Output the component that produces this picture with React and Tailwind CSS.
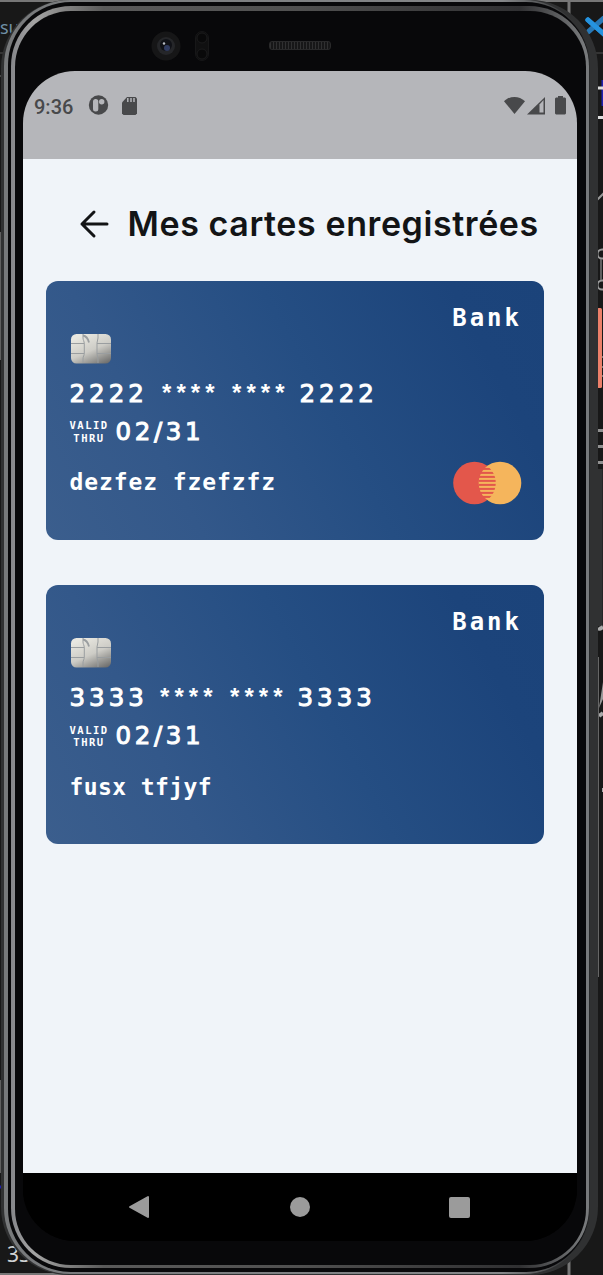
import React from "react";

const CARDS = [
  { number: "2222 **** **** 2222", first: "2222", last: "2222", date: "02/31", name: "dezfez fzefzfz", network: "mastercard", groups: "w-[90px]", stars: "w-[70px]", nameSpacing: "tracking-[0.900px]" },
  { number: "3333 **** **** 3333", first: "3333", last: "3333", date: "02/31", name: "fusx tfjyf", network: null, groups: "w-[88px]", stars: "w-[70px]", nameSpacing: "tracking-[0.400px]" },
];

function Chip({ id }) {
  return (
    <svg className="block h-[32px] w-[43px]" viewBox="0 0 43 32">
      <defs>
        <linearGradient id={id} x1="0.3" y1="0" x2="0.9" y2="1">
          <stop offset="0" stopColor="#e9e8e1" />
          <stop offset="0.5" stopColor="#cdccc6" />
          <stop offset="1" stopColor="#6c6c6b" />
        </linearGradient>
      </defs>
      <rect x="1" y="1" width="40" height="29.5" rx="5.5" fill={`url(#${id})`} />
      <g fill="none" stroke="#9a9ea0" strokeWidth="1">
        <path d="M13 1v4c0 2 1.300 3 1.300 6v9c0 3-1.300 3-1.300 6v4M28 1v4l-1 5v11l1 5v4M1 10.500h13M1 20.500h13M27 10.500h14M27 20.500h14" />
        <path d="M13 2.500c3 .5 5 3 6 7" strokeWidth="1.800" />
      </g>
    </svg>
  );
}

function Mastercard() {
  const bars = [6, 10, 14, 18, 22, 26, 30, 34];
  return (
    <svg className="block h-[44px] w-[69px]" viewBox="0 0 69 44">
      <defs>
        <clipPath id="overlap"><circle cx="21.500" cy="22" r="21.300" /></clipPath>
      </defs>
      <circle cx="21.500" cy="22" r="21.300" fill="#e3574b" />
      <circle cx="47" cy="22" r="21.300" fill="#f5b55c" />
      <g clipPath="url(#overlap)" fill="#e3574b">
        {bars.map((y) => (
          <rect key={y} x={y < 10 || y > 32 ? 30 : 26} y={y + 0.9} width="18" height="2" />
        ))}
      </g>
    </svg>
  );
}

function BankCard({ card, index }) {
  return (
    <section className="flex h-[259px] w-[498.500px] flex-col rounded-[12px] bg-[linear-gradient(62deg,#3b5e8d_0%,#33588a_25%,#254e83_55%,#1c447b_85%,#1b437a_100%)] pl-[24px] pr-[22px] pt-[22px] text-white">
      <div className="flex h-[30px] justify-end font-['DejaVu_Sans_Mono',monospace] text-[24px] font-bold leading-[30px] tracking-[3px]">Bank</div>
      <Chip id={`chip-${index}`} />
      <div className="mt-[12px] flex h-[34px] items-center whitespace-pre font-['DejaVu_Sans',sans-serif] text-[24.500px] leading-[34px] tracking-[4px] [-webkit-text-stroke:1px_white]">
        <span className={`block ${card.groups}`}>{card.first}</span>
        <span className={`block pt-[4px] font-['Liberation_Mono',monospace] text-[24px] font-bold tracking-[0px] [-webkit-text-stroke:0px] ${card.stars}`}>****</span>
        <span className={`block pt-[4px] font-['Liberation_Mono',monospace] text-[24px] font-bold tracking-[0px] [-webkit-text-stroke:0px] ${card.stars}`}>****</span>
        <span className="block">{card.last}</span>
      </div>
      <div className="mt-[4px] flex h-[34px] items-center">
        <div className="w-[46px] pr-[7px] text-center font-['DejaVu_Sans_Mono',monospace] text-[10.500px] font-bold leading-[12.500px] tracking-[1.500px]">
          VALID<br />THRU
        </div>
        <div className="font-['DejaVu_Sans',sans-serif] text-[24.500px] leading-[34px] tracking-[3.600px] [-webkit-text-stroke:1px_white]">{card.date}</div>
      </div>
      <div className="flex h-[68px] items-center justify-between">
        <div className={`font-['DejaVu_Sans_Mono',monospace] text-[23px] font-bold ${card.nameSpacing}`}>{card.name}</div>
        {card.network && <Mastercard />}
      </div>
    </section>
  );
}

function StatusBar() {
  return (
    <div className="flex h-[88px] shrink-0 items-start bg-[#b5b6ba] pl-[11px] pr-[11px] pt-[24px] text-[#48494b]">
      <span className="w-[54px] font-['Roboto',sans-serif] text-[20px] font-medium leading-[24px]">9:36</span>
      <svg className="h-[20px] w-[21px]" viewBox="0 0 21 20">
        <circle cx="10.500" cy="10" r="9.700" fill="currentColor" />
        <rect x="5" y="4" width="5.300" height="12.500" rx="2.500" fill="#b5b6ba" />
        <circle cx="13.700" cy="6.700" r="2.700" fill="#b5b6ba" />
      </svg>
      <svg className="ml-[13px] mt-[2px] h-[18px] w-[15px]" viewBox="0 0 15 18">
        <path d="M5 0h8.500L15 1.500v15L13.500 18h-12L0 16.500V5.500Z" fill="currentColor" />
        <path d="M5.800 1v4M9 1v4M12 1v4" stroke="#b5b6ba" strokeWidth="1.500" />
      </svg>
      <div className="ml-auto flex pt-px">
        <svg className="h-[19px] w-[21px]" viewBox="0 0 21 19"><path d="M0 5.200C6-.5 15-.5 21 5.200L10.500 18Z" fill="currentColor" /></svg>
        <svg className="ml-[2px] h-[19px] w-[18px]" viewBox="0 0 18 19">
          <path d="M0 18.500 18 1v17.500Z" fill="currentColor" />
          <path d="M12.500 8.500 16.500 4v12.500h-4Z" fill="#b5b6ba" />
        </svg>
        <svg className="ml-[10px] h-[19px] w-[11px]" viewBox="0 0 11 19"><path d="M3 0h5v1.500h2l1 1v15l-1 1H1l-1-1v-15l1-1h2Z" fill="currentColor" /></svg>
      </div>
    </div>
  );
}

function Desktop() {
  return (
    <div className="absolute inset-0">
      <svg className="block h-[1275px] w-[603px]" viewBox="0 0 603 1275">
        <path d="M0 1h603" stroke="#777" strokeWidth="2" />
        <path d="M569 0v40M569 1250v25M0 1274.500h520" stroke="#777" strokeWidth="3" />
        <path d="M0 53h30M590 53h13" stroke="#343434" strokeWidth="2" />
        <path d="M0 76h3" stroke="#777" strokeWidth="1" />
        <path d="M.5 232v128M.5 1080v93" stroke="#606060" strokeWidth="1.500" />
        <path d="M0 1187h2M603 80v26" stroke="#2020b0" strokeWidth="3" />
        <path d="M588 20 605 35" stroke="#2593df" strokeWidth="5" strokeLinecap="round" />
        <path d="M588 32 604 18" stroke="#2878b5" strokeWidth="5" strokeLinecap="round" />
        <path d="M588 20 605 35" stroke="#2593df" strokeWidth="5" strokeLinecap="round" />
        <path d="M597 88h6M597 117.500h6" stroke="#ddd" strokeWidth="3" />
        <path d="m596 201 8-8" stroke="#999" strokeWidth="2" />
        <circle cx="602" cy="254" r="4.500" fill="none" stroke="#999" strokeWidth="2" />
        <circle cx="602" cy="285" r="4.500" fill="none" stroke="#999" strokeWidth="2" />
        <path d="M601 259v21" stroke="#777" strokeWidth="1.500" />
        <rect x="597" y="308" width="5" height="80" rx="1.500" fill="#ed806a" />
        <path d="M602 357h1M602 367h1M602 376h1" stroke="#777" strokeWidth="2" />
        <path d="M597 430.500h6M597 446.500h6M597 462.500h6" stroke="#909090" strokeWidth="3" />
        <path d="M600 469v157" stroke="#303132" strokeWidth="5" />
        <path d="M598 628c2 2 3 0 5-1M599 716l4-3M602 790h1" fill="none" stroke="#aaa" strokeWidth="4" />
        <path d="m599 708 4-26v17Z" fill="#999" />
        <path d="M598.500 657v320" stroke="#666" strokeWidth="1" />
      </svg>
    </div>
  );
}

export default function App() {
  return (
    <div className="relative flex h-[1275px] w-[603px] overflow-hidden bg-[#181818] pl-px">
      <Desktop />
      <span className="absolute left-0 top-[16px] font-['Noto_Sans',sans-serif] text-[18px] leading-[22px] text-[#6f8fa5]">su</span>
      <span className="absolute left-[7px] top-[1242px] font-['Noto_Sans',sans-serif] text-[21px] leading-[25px] text-[#cfd1d2]">33</span>

      <div className="relative flex h-[1275px] w-[597px] rounded-[68px] bg-[#303132] pb-px pl-[3px] pr-[8px]">
        <div className="flex flex-1 rounded-[66px] bg-[linear-gradient(90deg,#77797b_0%,#858789_85%,#292a2b_98%)] pb-[2px] pl-[4px] pr-px pt-[2px]">
          <div className="flex flex-1 rounded-[63px] bg-[#08080a] pb-[4px] pl-[3px] pt-[4px]">
            <div className="flex flex-1 rounded-[60px] bg-[linear-gradient(90deg,#85868a_0%,#a4a4a4_4%,#5a5a5a_16%,#505050_50%,#303032_88%,#77797b_99%)] pb-[3px] pl-[4px] pr-[3px] pt-[5px]">
              <div className="flex flex-1 flex-col rounded-[56px] bg-[#08080a] pl-[8px] pr-[9px]">
                <div className="flex h-[60px] shrink-0 items-start pl-[128px] pt-[20px]">
                  <svg className="h-[30px] w-[30px]" viewBox="0 0 30 30">
                    <circle cx="15" cy="15" r="14.500" fill="#161617" />
                    <circle cx="15" cy="15" r="9" fill="#252629" />
                    <circle cx="15" cy="14" r="6" fill="#101117" />
                    <circle cx="16" cy="17" r="3" fill="#303b60" />
                    <circle cx="13" cy="12.500" r="1.200" fill="#b9bdc5" />
                  </svg>
                  <svg className="ml-[14px] h-[30px] w-[14px]" viewBox="0 0 14 30">
                    <rect x=".5" y=".5" width="13" height="29" rx="6.500" fill="#101011" stroke="#171718" />
                    <circle cx="7" cy="7" r="5" fill="#09090a" stroke="#1b1b1c" />
                    <circle cx="7" cy="23" r="5" fill="#09090a" stroke="#1b1b1c" />
                  </svg>
                  <div className="ml-[60px] mt-[10px] h-[9px] w-[62px] rounded-[3px] border border-[#29292a] bg-[repeating-linear-gradient(90deg,#303031_0px,#303031_1px,#171718_1px,#171718_3px)]" />
                </div>
                <main className="flex h-[1170px] w-[554px] shrink-0 flex-col overflow-hidden rounded-[52px] bg-black">
                  <StatusBar />
                  <div className="flex h-[1014px] shrink-0 flex-col bg-[#f0f4f9] pl-[22.500px]">
                    <header className="flex h-[121.500px] shrink-0 items-start pl-[33px] pt-[44px] text-[#131416]">
                      <svg className="mt-[6px] h-[30px] w-[30px]" viewBox="0 0 30 30">
                        <path d="M28 15H3M15 3 3 15l12 12" fill="none" stroke="currentColor" strokeWidth="3" strokeLinecap="round" strokeLinejoin="round" />
                      </svg>
                      <h1 className="ml-[19px] whitespace-nowrap font-['Inter',sans-serif] text-[34px] font-semibold leading-[42px] tracking-[0.590px]">Mes cartes enregistrées</h1>
                    </header>
                    <div className="flex flex-col gap-[45.500px]">
                      {CARDS.map((card, index) => <BankCard key={card.number} card={card} index={index} />)}
                    </div>
                  </div>
                  <nav className="flex h-[68px] shrink-0 items-center bg-black pl-[105px] text-[#9b9b9b]">
                    <svg className="h-[24px] w-[22px]" viewBox="0 0 22 24"><path d="M2 12 20 2v20Z" fill="currentColor" stroke="currentColor" strokeWidth="2" strokeLinejoin="round" /></svg>
                    <span className="ml-[140px] h-[20px] w-[20px] rounded-full bg-current" />
                    <span className="ml-[139px] h-[21px] w-[21px] rounded-[2px] bg-current" />
                  </nav>
                </main>
              </div>
            </div>
          </div>
        </div>
      </div>
    </div>
  );
}
